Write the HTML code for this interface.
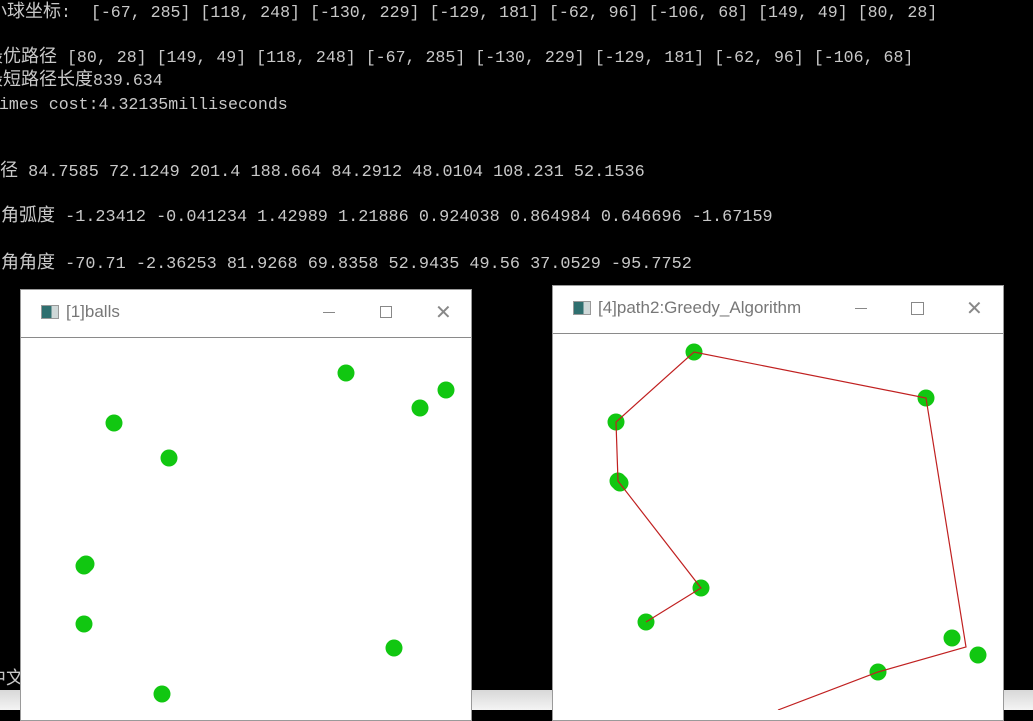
<!DOCTYPE html>
<html><head><meta charset="utf-8"><style>
html,body{margin:0;padding:0}
body{width:1033px;height:710px;background:#000;position:relative;overflow:hidden;font-family:"Liberation Mono","Noto Sans CJK SC",monospace;color:#c8c8c8}
.t{position:absolute;white-space:pre;font-size:16.6px;line-height:20px}
.n{position:absolute;white-space:pre;font-size:16.85px;line-height:20px;font-family:"Liberation Mono","Noto Sans CJK SC",monospace}
.c{font-family:"Noto Sans CJK SC",sans-serif;font-size:18px;line-height:10px}
.win{position:absolute;background:#fff;border:1px solid #9a9a9a}
.tb{position:absolute;left:0;right:0;top:0;height:47px;border-bottom:1px solid #8a8a8a;background:#fff}
.tt{position:absolute;top:12px;font:17px "Liberation Sans",sans-serif;color:#777}
.ic{position:absolute;top:15px;width:16px;height:12px;background:linear-gradient(90deg,#2f6f6f 60%,#cfd8d8 60%);border:1px solid #999}
.bottom{position:absolute;left:0;right:0;top:690px;height:20px;background:linear-gradient(#d8d8d8,#f4f4f4)}
</style></head><body>
<div class="bottom"></div>
<div class="t" style="left:-11px;top:3px"><span class="c">小球坐标</span>:  [-67, 285] [118, 248] [-130, 229] [-129, 181] [-62, 96] [-106, 68] [149, 49] [80, 28]</div>
<div class="t" style="left:-15px;top:48px"><span class="c">最优路径</span> [80, 28] [149, 49] [118, 248] [-67, 285] [-130, 229] [-129, 181] [-62, 96] [-106, 68]</div>
<div class="t" style="left:-15px;top:71px"><span class="c">最短路径长度</span>839.634</div>
<div class="t" style="left:-11px;top:95px">times cost:4.32135milliseconds</div>
<div class="n" style="left:-18px;top:163px"><span class="c">半径</span> 84.7585 72.1249 201.4 188.664 84.2912 48.0104 108.231 52.1536</div>
<div class="n" style="left:-17px;top:208px"><span class="c">夹角弧度</span> -1.23412 -0.041234 1.42989 1.21886 0.924038 0.864984 0.646696 -1.67159</div>
<div class="n" style="left:-17px;top:255px"><span class="c">夹角角度</span> -70.71 -2.36253 81.9268 69.8358 52.9435 49.56 37.0529 -95.7752</div>
<div class="t" style="left:-12px;top:670px"><span class="c">中文</span></div>

<div class="win" style="left:20px;top:289px;width:450px;height:430px">
 <div class="tb"><div class="ic" style="left:20px"></div><div class="tt" style="left:45px">[1]balls</div>
 <div style="position:absolute;left:302px;top:22px;width:12px;height:1px;background:#888"></div>
 <div style="position:absolute;left:359px;top:16px;width:10px;height:10px;border:1px solid #888"></div>
 <div style="position:absolute;left:414px;top:10px;font:20px 'Liberation Sans';color:#888">✕</div></div>
</div>
<div class="win" style="left:552px;top:285px;width:450px;height:434px">
 <div class="tb"><div class="ic" style="left:20px"></div><div class="tt" style="left:45px">[4]path2:Greedy_Algorithm</div>
 <div style="position:absolute;left:302px;top:22px;width:12px;height:1px;background:#888"></div>
 <div style="position:absolute;left:358px;top:16px;width:11px;height:11px;border:1px solid #888"></div>
 <div style="position:absolute;left:413px;top:10px;font:20px 'Liberation Sans';color:#888">✕</div></div>
</div>
<svg width="1033" height="710" style="position:absolute;left:0;top:0">
<g fill="#11c711">
<circle cx="346" cy="373" r="8.5"/><circle cx="446" cy="390" r="8.5"/><circle cx="420" cy="408" r="8.5"/><circle cx="114" cy="423" r="8.5"/><circle cx="169" cy="458" r="8.5"/><circle cx="86" cy="564" r="8.5"/><circle cx="84" cy="566" r="8.5"/><circle cx="84" cy="624" r="8.5"/><circle cx="394" cy="648" r="8.5"/><circle cx="162" cy="694" r="8.5"/>
<circle cx="694" cy="352" r="8.5"/><circle cx="926" cy="398" r="8.5"/><circle cx="616" cy="422" r="8.5"/><circle cx="618" cy="481" r="8.5"/><circle cx="620" cy="483" r="8.5"/><circle cx="701" cy="588" r="8.5"/><circle cx="646" cy="622" r="8.5"/><circle cx="952" cy="638" r="8.5"/><circle cx="978" cy="655" r="8.5"/><circle cx="878" cy="672" r="8.5"/>
</g>
<polyline fill="none" stroke="#c02020" stroke-width="1.2" points="646,622 701,588 618,481 616,422 694,352 926,398 966,647 878,672 778,710"/>
</svg>
</body></html>
